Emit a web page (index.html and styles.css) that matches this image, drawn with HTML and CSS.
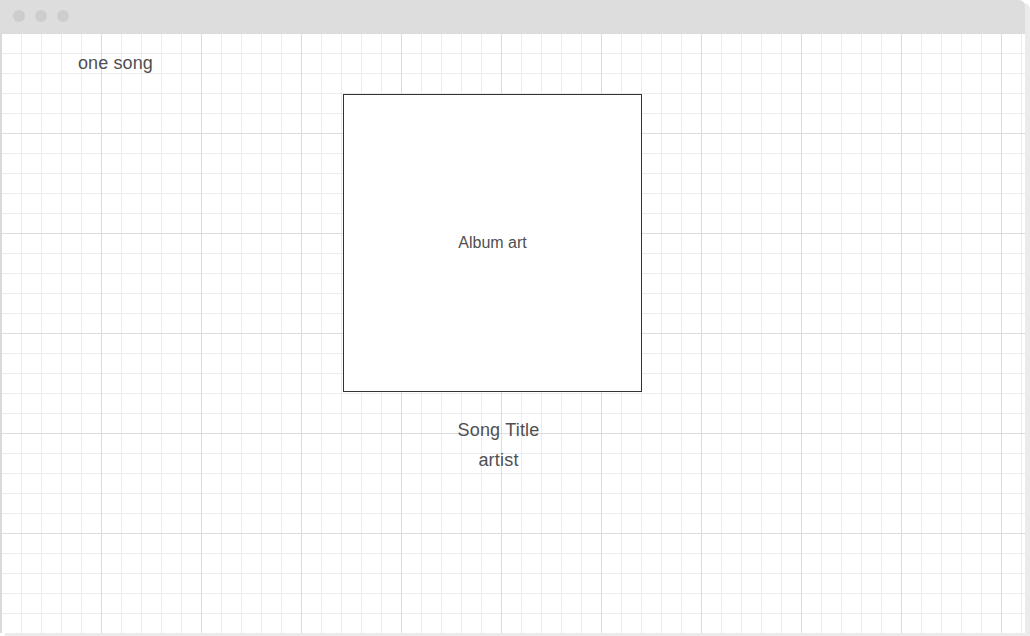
FILE: index.html
```html
<!DOCTYPE html>
<html>
<head>
<meta charset="utf-8">
<link rel="stylesheet" href="styles.css">
</head>
<body>
<div class="window">
  <div class="titlebar">
    <span class="dot"></span><span class="dot"></span><span class="dot"></span>
  </div>
  <div class="canvas">
    <div class="page-title">one song</div>
    <div class="player">
      <div class="album">Album art</div>
      <div class="caption">
        <div class="song">Song Title</div>
        <div class="artist">artist</div>
      </div>
    </div>
  </div>
</div>
</body>
</html>
```

FILE: styles.css
```css
html, body {
  margin: 0;
  padding: 0;
  background: #ffffff;
  width: 1030px;
  height: 636px;
  overflow: hidden;
}

body {
  font-family: "Liberation Sans", Arial, sans-serif;
  color: #505050;
}

.window {
  width: 1025px;
  height: 633px;
  display: flex;
  flex-direction: column;
  border-top-right-radius: 6px;
  box-shadow: 5px 3px 0 #ebebeb;
  background: #ffffff;
}

.titlebar {
  height: 33px;
  flex: none;
  background: #dddddd;
  border-top-right-radius: 6px;
  display: flex;
  align-items: center;
  gap: 10px;
  padding-left: 13px;
  padding-bottom: 1px;
  box-sizing: border-box;
}

.dot {
  width: 12px;
  height: 12px;
  border-radius: 50%;
  background: #cdcdcd;
}

.canvas {
  flex: 1;
  border-left: 1px solid #d9d9d9;
  background-color: #ffffff;
  background-image:
    linear-gradient(to right, #dcdcdc 1px, transparent 1px),
    linear-gradient(to bottom, #dcdcdc 1px, transparent 1px),
    linear-gradient(to right, #ececec 1px, transparent 1px),
    linear-gradient(to bottom, #ececec 1px, transparent 1px);
  background-size: 100px 100px, 100px 100px, 20px 20px, 20px 20px;
  background-position: 0 0;
  padding-top: 15px;
  box-sizing: border-box;
}

.page-title {
  font-size: 18px;
  line-height: 30px;
  padding-left: 77px;
  letter-spacing: 0.1px;
}

.player {
  margin-top: 16px;
  margin-left: 342px;
  display: flex;
  flex-direction: column;
}

.album {
  width: 297px;
  height: 296px;
  border: 1px solid #333333;
  background: #ffffff;
  display: flex;
  align-items: center;
  justify-content: center;
  font-size: 16px;
}

.caption {
  width: 311px;
  margin-top: 23px;
  text-align: center;
  font-size: 18px;
  line-height: 30px;
  letter-spacing: 0.2px;
}
```
